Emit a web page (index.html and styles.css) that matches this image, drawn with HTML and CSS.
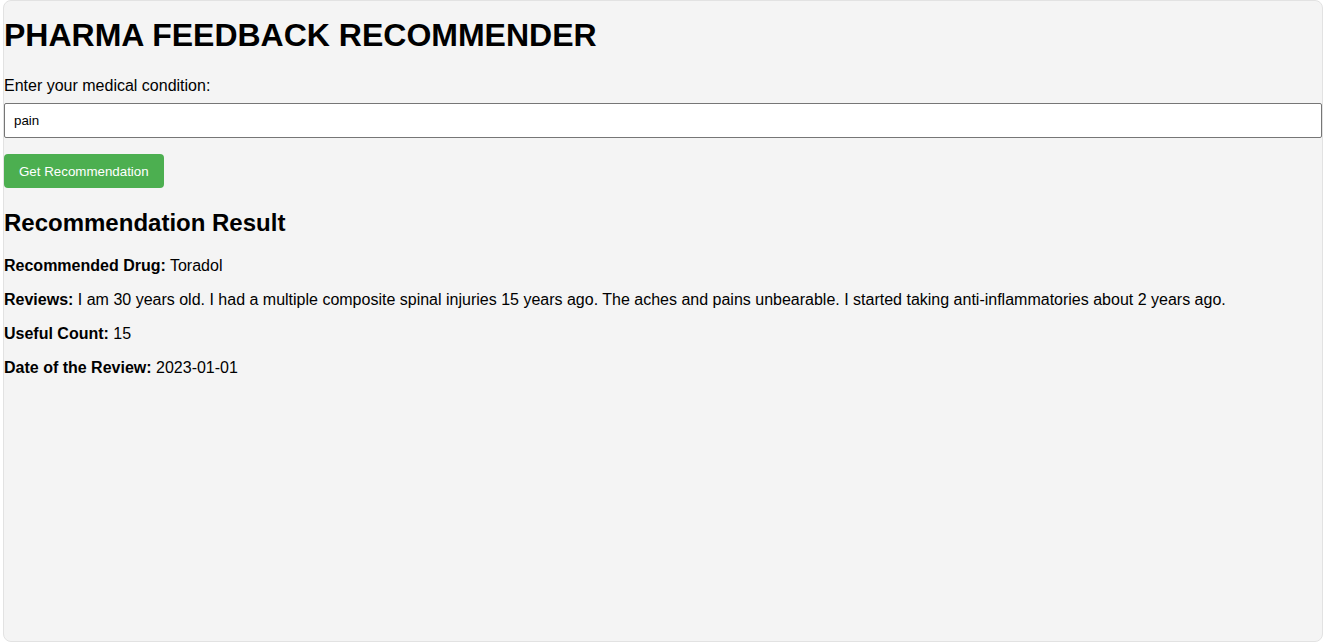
FILE: index.html
```html
<!DOCTYPE html>
<html lang="en">
<head>
<meta charset="utf-8">
<title>Pharma Feedback Recommender</title>
<link rel="stylesheet" href="styles.css">
</head>
<body>
<div class="container">
  <h1 class="title">PHARMA FEEDBACK RECOMMENDER</h1>
  <form class="form">
    <label class="label" for="condition">Enter your medical condition:</label>
    <input class="input" id="condition" type="text" value="pain">
    <button class="button" type="button">Get Recommendation</button>
  </form>
  <div class="result">
    <h2 class="result-title">Recommendation Result</h2>
    <p class="row"><strong>Recommended Drug:</strong> Toradol</p>
    <p class="row"><strong>Reviews:</strong> I am 30 years old. I had a multiple composite spinal injuries 15 years ago. The aches and pains unbearable. I started taking anti-inflammatories about 2 years ago.</p>
    <p class="row"><strong>Useful Count:</strong> 15</p>
    <p class="row"><strong>Date of the Review:</strong> 2023-01-01</p>
  </div>
</div>
</body>
</html>
```
FILE: styles.css
```css
html, body {
  margin: 0;
  padding: 0;
  background: #ffffff;
}
body {
  font-family: "Liberation Sans", Arial, sans-serif;
  font-size: 16px;
  color: #000;
}
.container {
  box-sizing: border-box;
  margin: 0 3px;
  height: 642px;
  background: #f4f4f4;
  border: 1px solid #e2e2e2;
  border-radius: 8px;
}
.title {
  font-size: 32px;
  font-weight: bold;
  margin: 16px 0 23px 0;
}
.form {
  display: flex;
  flex-direction: column;
  align-items: flex-start;
}
.label {
  display: block;
  margin-bottom: 8px;
}
.input {
  box-sizing: border-box;
  width: 100%;
  font-family: "Liberation Sans", Arial, sans-serif;
  font-size: 13.33px;
  padding: 9px;
  border: 1px solid #767676;
  border-radius: 2px;
  background: #fff;
  color: #000;
  margin: 0 0 16px 0;
}
.button {
  font-family: "Liberation Sans", Arial, sans-serif;
  font-size: 13.33px;
  padding: 9px 15px;
  height: 34px;
  background: #4caf50;
  color: #fff;
  border: none;
  border-radius: 4px;
}
.result-title {
  font-size: 24px;
  font-weight: bold;
  margin: 21px 0 20px 0;
}
.row {
  margin: 16px 0;
}
```
